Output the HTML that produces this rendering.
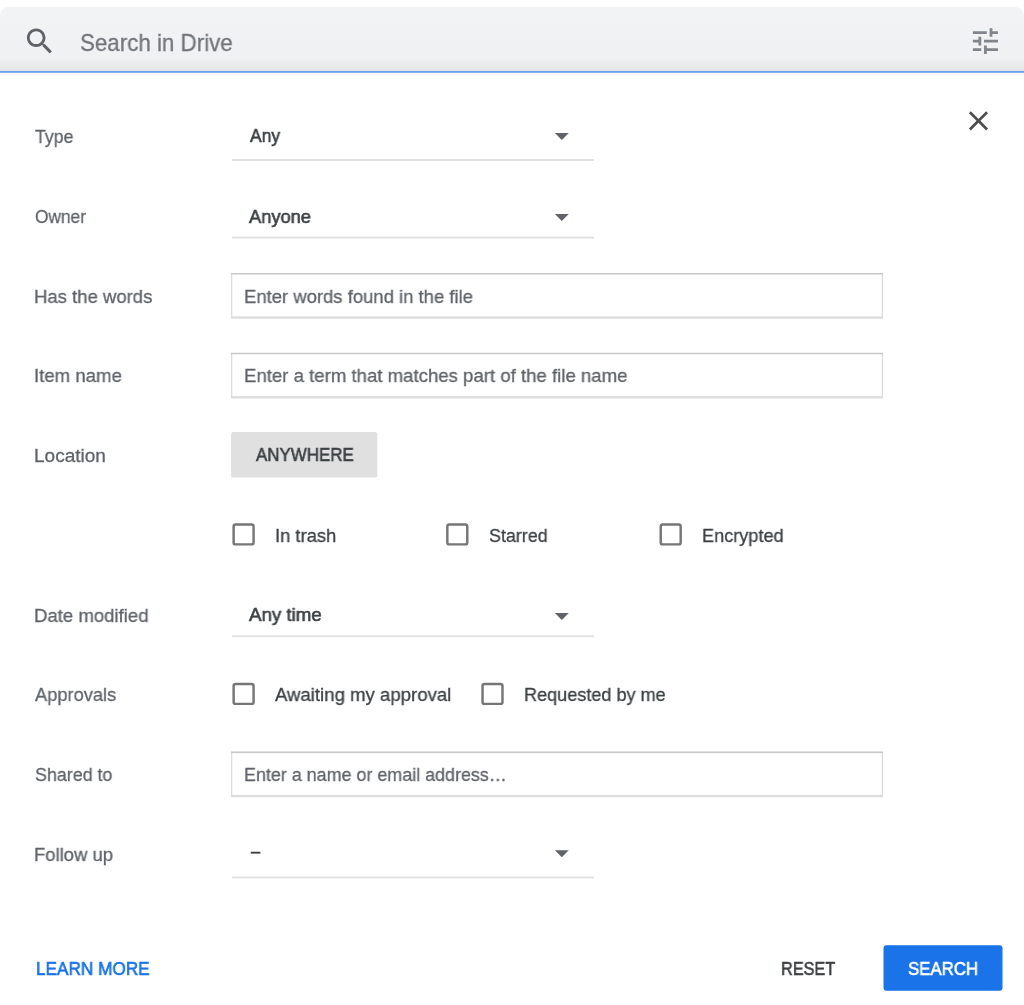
<!DOCTYPE html>
<html><head><meta charset="utf-8"><style>
html,body{margin:0;padding:0;background:#fff;width:1024px;height:1005px;overflow:hidden;position:relative}
body{font-family:"Liberation Sans",sans-serif}
#shapes{position:absolute;left:0;top:0}
.t{position:absolute;white-space:nowrap;line-height:normal;transform-origin:0 0;will-change:transform}
</style></head><body>
<svg id="shapes" width="1024" height="1005" viewBox="0 0 1024 1005"><defs><linearGradient id="bg" x1="0" y1="0" x2="0" y2="1"><stop offset="0" stop-color="#f1f3f4"/><stop offset="0.8" stop-color="#eff1f2"/><stop offset="1" stop-color="#e5e6e6"/></linearGradient></defs><path d="M0 15.5 A8.5 8.5 0 0 1 8.5 7 H1015.5 A8.5 8.5 0 0 1 1024 15.5 V71 H0 Z" fill="url(#bg)"/><rect x="0" y="70.0" width="1024" height="1" fill="#ecebe6"/><rect x="0" y="70.9" width="1024" height="2.0" fill="#6ca0f3"/><rect x="0" y="72.9" width="1024" height="1.2" fill="#f6f5f1"/><g transform="translate(22.6 24.1) scale(1.429)"><path fill="#5f6368" d="M15.5 14h-.79l-.28-.27C15.41 12.59 16 11.11 16 9.5 16 5.91 13.09 3 9.5 3S3 5.91 3 9.5 5.91 16 9.5 16c1.61 0 3.09-.59 4.23-1.57l.27.28v.79l5 4.99L20.49 19l-4.99-5zm-6 0C7.01 14 5 11.99 5 9.5S7.01 5 9.5 5 14 7.01 14 9.5 11.99 14 9.5 14z"/></g><g transform="translate(968.7 24.0) scale(1.394 1.425)"><path fill="#80868b" d="M3 17v2h6v-2H3zM3 5v2h10V5H3zm10 16v-2h8v-2h-8v-2h-2v6h2zM7 9v2H3v2h4v2h2V9H7zm14 4v-2H11v2h10zm-6-4h2V7h4V5h-4V3h-2v6z"/></g><g transform="translate(962.1 104.3) scale(1.365 1.379)"><path fill="#4d4d4d" d="M19 6.41L17.59 5 12 10.59 6.41 5 5 6.41 10.59 12 5 17.59 6.41 19 12 13.41 17.59 19 19 17.59 13.41 12z"/></g><path d="M554.9 133.00 h13.85 l-6.925 6.9 z" fill="#5f6368"/><rect x="232" y="159.10" width="362" height="1.8" fill="#e0e0e0"/><path d="M554.9 214.00 h13.85 l-6.925 6.9 z" fill="#5f6368"/><rect x="232" y="236.70" width="362" height="1.8" fill="#e0e0e0"/><path d="M554.9 613.00 h13.85 l-6.925 6.9 z" fill="#5f6368"/><rect x="232" y="635.30" width="362" height="1.8" fill="#e0e0e0"/><path d="M554.9 850.25 h13.85 l-6.925 6.9 z" fill="#5f6368"/><rect x="232" y="876.60" width="362" height="1.8" fill="#e0e0e0"/><rect x="231" y="273.10" width="652" height="45.6" fill="#dcdcdc"/><rect x="231" y="273.10" width="652" height="1.5" fill="#c8c8c8"/><rect x="232.3" y="274.60" width="649.4" height="41.80" fill="#fff"/><rect x="231" y="352.85" width="652" height="45.6" fill="#dcdcdc"/><rect x="231" y="352.85" width="652" height="1.5" fill="#c8c8c8"/><rect x="232.3" y="354.35" width="649.4" height="41.80" fill="#fff"/><rect x="231" y="751.60" width="652" height="45.6" fill="#dcdcdc"/><rect x="231" y="751.60" width="652" height="1.5" fill="#c8c8c8"/><rect x="232.3" y="753.10" width="649.4" height="41.80" fill="#fff"/><rect x="231" y="432" width="146.3" height="45.4" rx="2.5" fill="#e0e0e0"/><rect x="233.625" y="524.425" width="19.95" height="19.95" rx="2" fill="none" stroke="#767676" stroke-width="2.45"/><rect x="447.325" y="524.425" width="19.95" height="19.95" rx="2" fill="none" stroke="#767676" stroke-width="2.45"/><rect x="660.725" y="524.425" width="19.95" height="19.95" rx="2" fill="none" stroke="#767676" stroke-width="2.45"/><rect x="233.625" y="683.925" width="19.95" height="19.95" rx="2" fill="none" stroke="#767676" stroke-width="2.45"/><rect x="482.525" y="683.925" width="19.95" height="19.95" rx="2" fill="none" stroke="#767676" stroke-width="2.45"/><rect x="883.5" y="945.3" width="119" height="45.4" rx="3" fill="#1a73e8"/></svg>
<span class="t" style="left:79.67px;top:29.17px;font-size:24.00px;color:#70757a;transform:scaleX(0.9305);-webkit-text-stroke:0.3px #70757a;">Search in Drive</span>
<span class="t" style="left:35.00px;top:126.00px;font-size:19.00px;color:#5f6368;transform:scaleX(0.9354);-webkit-text-stroke:0.3px #5f6368;">Type</span>
<span class="t" style="left:35.00px;top:205.75px;font-size:19.00px;color:#5f6368;transform:scaleX(0.9094);-webkit-text-stroke:0.3px #5f6368;">Owner</span>
<span class="t" style="left:34.03px;top:285.50px;font-size:19.00px;color:#5f6368;transform:scaleX(0.9747);-webkit-text-stroke:0.3px #5f6368;">Has the words</span>
<span class="t" style="left:34.02px;top:365.25px;font-size:19.00px;color:#5f6368;transform:scaleX(0.9797);-webkit-text-stroke:0.3px #5f6368;">Item name</span>
<span class="t" style="left:34.01px;top:445.00px;font-size:19.00px;color:#5f6368;transform:scaleX(0.9948);-webkit-text-stroke:0.3px #5f6368;">Location</span>
<span class="t" style="left:34.02px;top:604.50px;font-size:19.00px;color:#5f6368;transform:scaleX(0.9770);-webkit-text-stroke:0.3px #5f6368;">Date modified</span>
<span class="t" style="left:35.00px;top:684.25px;font-size:19.00px;color:#5f6368;transform:scaleX(0.9608);-webkit-text-stroke:0.3px #5f6368;">Approvals</span>
<span class="t" style="left:35.00px;top:764.00px;font-size:19.00px;color:#5f6368;transform:scaleX(0.9398);-webkit-text-stroke:0.3px #5f6368;">Shared to</span>
<span class="t" style="left:34.03px;top:843.75px;font-size:19.00px;color:#5f6368;transform:scaleX(0.9718);-webkit-text-stroke:0.3px #5f6368;">Follow up</span>
<span class="t" style="left:249.50px;top:124.60px;font-size:19.00px;color:#3c4043;transform:scaleX(0.9176);-webkit-text-stroke:0.6px #3c4043;">Any</span>
<span class="t" style="left:249.30px;top:205.80px;font-size:19.00px;color:#3c4043;transform:scaleX(0.9628);-webkit-text-stroke:0.6px #3c4043;">Anyone</span>
<span class="t" style="left:249.30px;top:604.20px;font-size:19.00px;color:#3c4043;transform:scaleX(0.9844);-webkit-text-stroke:0.6px #3c4043;">Any time</span>
<span class="t" style="left:250.50px;top:840.20px;font-size:19.00px;color:#3c4043;transform:scaleX(0.8636);-webkit-text-stroke:0.6px #3c4043;">–</span>
<span class="t" style="left:243.93px;top:285.50px;font-size:19.00px;color:#5f6368;transform:scaleX(0.9720);-webkit-text-stroke:0.3px #5f6368;">Enter words found in the file</span>
<span class="t" style="left:243.92px;top:365.25px;font-size:19.00px;color:#5f6368;transform:scaleX(0.9786);-webkit-text-stroke:0.3px #5f6368;">Enter a term that matches part of the file name</span>
<span class="t" style="left:243.96px;top:764.00px;font-size:19.00px;color:#5f6368;transform:scaleX(0.9424);-webkit-text-stroke:0.3px #5f6368;">Enter a name or email address…</span>
<span class="t" style="left:255.50px;top:443.84px;font-size:18.40px;color:#3c4043;transform:scaleX(0.9198);-webkit-text-stroke:0.6px #3c4043;">ANYWHERE</span>
<span class="t" style="left:275.03px;top:524.60px;font-size:19.00px;color:#3c4043;transform:scaleX(0.9677);-webkit-text-stroke:0.3px #3c4043;">In trash</span>
<span class="t" style="left:489.20px;top:524.60px;font-size:19.00px;color:#3c4043;transform:scaleX(0.9410);-webkit-text-stroke:0.3px #3c4043;">Starred</span>
<span class="t" style="left:702.45px;top:524.60px;font-size:19.00px;color:#3c4043;transform:scaleX(0.9538);-webkit-text-stroke:0.3px #3c4043;">Encrypted</span>
<span class="t" style="left:275.40px;top:684.10px;font-size:19.00px;color:#3c4043;transform:scaleX(0.9781);-webkit-text-stroke:0.3px #3c4043;">Awaiting my approval</span>
<span class="t" style="left:524.05px;top:684.10px;font-size:19.00px;color:#3c4043;transform:scaleX(0.9515);-webkit-text-stroke:0.3px #3c4043;">Requested by me</span>
<span class="t" style="left:35.69px;top:957.69px;font-size:18.90px;color:#1a73e8;transform:scaleX(0.9099);-webkit-text-stroke:0.6px #1a73e8;">LEARN MORE</span>
<span class="t" style="left:781.34px;top:957.79px;font-size:18.90px;color:#3c4043;transform:scaleX(0.8600);-webkit-text-stroke:0.6px #3c4043;">RESET</span>
<span class="t" style="left:908.00px;top:957.79px;font-size:18.90px;color:#ffffff;transform:scaleX(0.8901);-webkit-text-stroke:0.6px #ffffff;">SEARCH</span>
</body></html>
